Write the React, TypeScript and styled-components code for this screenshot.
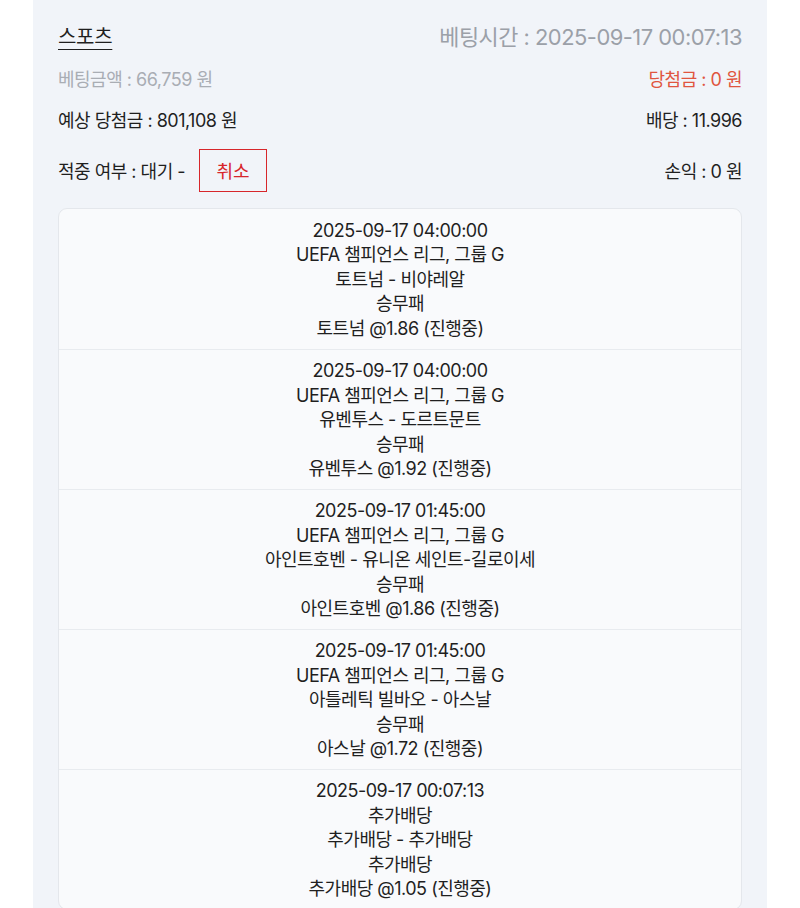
import styled, { createGlobalStyle } from "styled-components";

const GlobalStyle = createGlobalStyle`
  html, body {
    margin: 0;
    padding: 0;
    background: #ffffff;
  }
  body {
    font-family: Inter, "Noto Sans CJK KR", sans-serif;
    color: #1f1f1f;
  }
`;

const Panel = styled.div`
  margin: 0 33px;
  min-height: 908px;
  background-color: #f1f4f9;
  padding: 19px 25px 0;
  box-sizing: border-box;
  overflow: hidden;
`;

const Row = styled.div<{ $height: number }>`
  display: flex;
  justify-content: space-between;
  align-items: center;
  height: ${(props) => props.$height}px;
`;

const Text = styled.span<{ $tone?: "dark" | "muted" | "light" | "red"; $size?: number }>`
  font-size: ${(props) => props.$size ?? 18}px;
  letter-spacing: -0.5px;
  color: ${(props) =>
    props.$tone === "muted"
      ? "#9ba0a8"
      : props.$tone === "light"
      ? "#a9adb4"
      : props.$tone === "red"
      ? "#e0553f"
      : "#1f1f1f"};
`;

const Title = styled.span`
  font-size: 20px;
  letter-spacing: -0.3px;
  color: #1f1f1f;
  text-decoration: underline;
  text-underline-offset: 5px;
  text-decoration-thickness: 1px;
`;

const Status = styled.div`
  display: flex;
  align-items: center;
  gap: 14px;
`;

const CancelButton = styled.button`
  width: 68px;
  height: 43px;
  border: 1.5px solid #d7262b;
  background: transparent;
  color: #d7262b;
  font-family: Inter, "Noto Sans CJK KR", sans-serif;
  font-size: 18px;
  padding: 0;
  cursor: pointer;
`;

const Card = styled.div`
  margin-top: 1px;
  background-color: #f9fafc;
  border: 1px solid #e4e7ec;
  border-radius: 9px;
`;

const Bet = styled.div`
  height: 140px;
  box-sizing: border-box;
  padding: 8px 0 6px;
  display: flex;
  flex-direction: column;
  align-items: center;
  justify-content: center;
  border-top: 1px solid #e8ebef;
  &:first-child {
    border-top: none;
  }
`;

const Line = styled.span`
  font-size: 18px;
  line-height: 24.5px;
  letter-spacing: -0.5px;
  color: #1f1f1f;
`;

const bets = [
  {
    time: "2025-09-17 04:00:00",
    league: "UEFA 챔피언스 리그, 그룹 G",
    match: "토트넘 - 비야레알",
    market: "승무패",
    pick: "토트넘 @1.86 (진행중)",
  },
  {
    time: "2025-09-17 04:00:00",
    league: "UEFA 챔피언스 리그, 그룹 G",
    match: "유벤투스 - 도르트문트",
    market: "승무패",
    pick: "유벤투스 @1.92 (진행중)",
  },
  {
    time: "2025-09-17 01:45:00",
    league: "UEFA 챔피언스 리그, 그룹 G",
    match: "아인트호벤 - 유니온 세인트-길로이세",
    market: "승무패",
    pick: "아인트호벤 @1.86 (진행중)",
  },
  {
    time: "2025-09-17 01:45:00",
    league: "UEFA 챔피언스 리그, 그룹 G",
    match: "아틀레틱 빌바오 - 아스날",
    market: "승무패",
    pick: "아스날 @1.72 (진행중)",
  },
  {
    time: "2025-09-17 00:07:13",
    league: "추가배당",
    match: "추가배당 - 추가배당",
    market: "추가배당",
    pick: "추가배당 @1.05 (진행중)",
  },
];

export default function App() {
  return (
    <>
      <GlobalStyle />
      <Panel>
        <Row $height={32}>
          <Title>스포츠</Title>
          <Text $tone="muted" $size={21.9}>
            베팅시간 : 2025-09-17 00:07:13
          </Text>
        </Row>
        <Row $height={54}>
          <Text $tone="light">베팅금액 : 66,759 원</Text>
          <Text $tone="red">당첨금 : 0 원</Text>
        </Row>
        <Row $height={28}>
          <Text>예상 당첨금 : 801,108 원</Text>
          <Text>배당 : 11.996</Text>
        </Row>
        <Row $height={74}>
          <Status>
            <Text>적중 여부 : 대기 -</Text>
            <CancelButton>취소</CancelButton>
          </Status>
          <Text>손익 : 0 원</Text>
        </Row>
        <Card>
          {bets.map((b, i) => (
            <Bet key={i}>
              <Line>{b.time}</Line>
              <Line>{b.league}</Line>
              <Line>{b.match}</Line>
              <Line>{b.market}</Line>
              <Line>{b.pick}</Line>
            </Bet>
          ))}
        </Card>
      </Panel>
    </>
  );
}
